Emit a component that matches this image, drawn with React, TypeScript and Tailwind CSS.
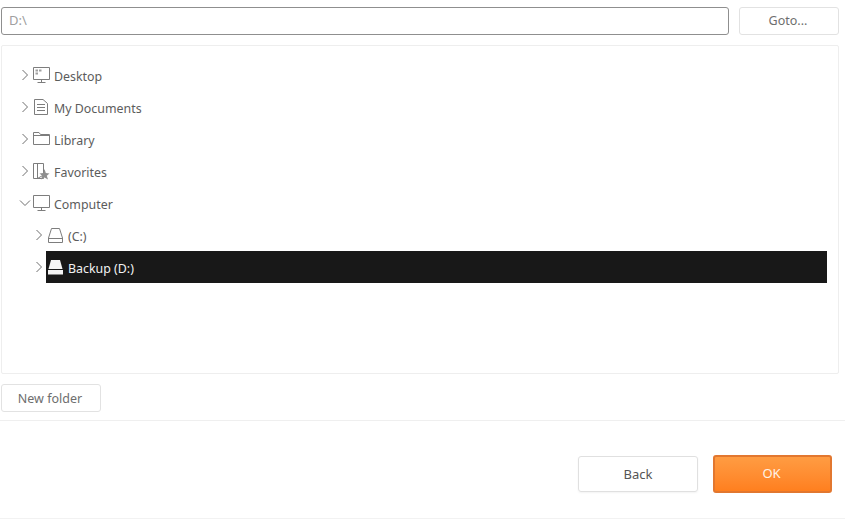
import { ReactNode } from "react";

const stroke = "#7d7d7d";

function Chevron({ open, color = "#6f6f6f" }: { open?: boolean; color?: string }) {
  return (
    <svg width="12" height="12" viewBox="0 0 12 12" fill="none" stroke={color} strokeWidth="1">
      {open ? <path d="M1 3.5 L6 8.5 L11 3.5" /> : <path d="M3.5 1 L8.5 6 L3.5 11" />}
    </svg>
  );
}

function DesktopIcon() {
  return (
    <svg width="17" height="17" viewBox="0 0 17 17" fill="none" stroke={stroke} strokeWidth="1">
      <path d="M0.5 0.5 H16.5 V12.5 H0.5 Z" />
      <path d="M8.5 12.5 V15 M4.5 15.5 H12.5" />
      <path d="M2.5 2.5 H5 V4.5 H2.5 Z M6 2.5 H8.5 V4.5 H6 Z M2.5 5.5 H5 V7.5 H2.5 Z" fill="#a0a0a0" stroke="none" />
    </svg>
  );
}

function DocIcon() {
  return (
    <svg width="17" height="17" viewBox="0 0 17 17" fill="none" stroke={stroke} strokeWidth="1">
      <path d="M1.5 0.5 H10 L14.5 4.5 V15.5 H1.5 Z" />
      <path d="M4 5.5 H12 M4 8.5 H12 M4 11.5 H12" />
    </svg>
  );
}

function FolderIcon() {
  return (
    <svg width="17" height="17" viewBox="0 0 17 17" fill="none" stroke={stroke} strokeWidth="1">
      <path d="M0.5 13.5 V1.5 H6 L7.5 3.5 H16.5 V13.5 Z" />
      <path d="M0.5 4.5 H16.5" />
    </svg>
  );
}

function FavoritesIcon() {
  return (
    <svg width="17" height="17" viewBox="0 0 17 17" fill="none" stroke={stroke} strokeWidth="1">
      <path d="M0.5 0.5 H10.5 V15.5 H0.5 Z" />
      <path d="M4.5 0.5 V15.5 L10.5 12" />
      <path d="M11.5 6 L12.8 10 L16.5 10.5 L13.8 12.8 L15 16.5 L11.5 14.5 L8 16.5 L9.2 12.8 L6.5 10.5 L10.2 10 Z" fill="#8f8f8f" stroke="none" />
    </svg>
  );
}

function MonitorIcon() {
  return (
    <svg width="17" height="17" viewBox="0 0 17 17" fill="none" stroke={stroke} strokeWidth="1">
      <path d="M0.5 0.5 H16.5 V12.5 H0.5 Z" />
      <path d="M8.5 12.5 V15 M4.5 15.5 H12.5" />
    </svg>
  );
}

function DriveIcon({ selected }: { selected?: boolean }) {
  if (selected) {
    return (
      <svg width="17" height="17" viewBox="0 0 17 17" fill="#f4f4f4" stroke="none">
        <path d="M4 1 H13 L15.5 10 H1.5 Z" />
        <path d="M1 11 H16 V15.5 H1 Z" />
      </svg>
    );
  }
  return (
    <svg width="17" height="17" viewBox="0 0 17 17" fill="none" stroke={stroke} strokeWidth="1">
      <path d="M4.5 1.5 H12.5 L15.5 11 V15.5 H1.5 V11 Z" />
      <path d="M1.5 11.5 H15.5" />
    </svg>
  );
}

function TreeRow({
  icon,
  label,
  open,
  nested,
  selected,
}: {
  icon: ReactNode;
  label: string;
  open?: boolean;
  nested?: boolean;
  selected?: boolean;
}) {
  return (
    <div className={`flex h-8 items-center ${nested ? "pl-[31px]" : "pl-[17px]"}`}>
      <span className="flex w-[13px] shrink-0 -translate-x-px justify-center">
        <Chevron open={open} />
      </span>
      <div
        className={`flex h-8 flex-1 items-center gap-1 ${
          selected ? "bg-[#181818] text-[#f2f2f2]" : "text-[#5c5c5c]"
        }`}
      >
        <span className="ml-px flex">{icon}</span>
        <span className="translate-y-[2px] text-[12.4px]">{label}</span>
      </div>
    </div>
  );
}

export default function App() {
  return (
    <div className="flex h-[520px] w-[845px] flex-col overflow-hidden bg-white font-['Noto_Sans',sans-serif]">
      <div className="flex gap-2.5 pl-px pr-1.5 pt-[7px]">
        <div className="flex h-7 flex-1 items-center rounded-[3px] border border-[#8f8f8f] px-[7px] text-[13px] text-[#a0a0a0]">
          D:\
        </div>
        <button className="h-7 w-[100px] rounded-[3px] border border-[#e2e2e2] pr-0.5 text-[12.5px] text-[#6e6e6e]">
          Goto...
        </button>
      </div>

      <div className="ml-px mr-1.5 mt-2.5 h-[329px] rounded-[2px] border border-[#eeeeee] pr-[11px] pt-[13px]">
        <TreeRow icon={<DesktopIcon />} label="Desktop" />
        <TreeRow icon={<DocIcon />} label="My Documents" />
        <TreeRow icon={<FolderIcon />} label="Library" />
        <TreeRow icon={<FavoritesIcon />} label="Favorites" />
        <TreeRow icon={<MonitorIcon />} label="Computer" open />
        <TreeRow icon={<DriveIcon />} label="(C:)" nested />
        <TreeRow icon={<DriveIcon selected />} label="Backup (D:)" nested selected />
      </div>

      <div className="ml-px mt-2.5">
        <button className="h-7 w-[100px] rounded-[3px] border border-[#e2e2e2] pr-0.5 pt-0.5 text-[12.5px] text-[#6e6e6e]">
          New folder
        </button>
      </div>

      <div className="mt-2 border-t border-[#efefef]" />

      <div className="flex items-center justify-end gap-[15px] pr-[13px] pt-[34px]">
        <button className="h-9 w-[120px] rounded-[3px] border border-[#e0e0e0] pt-0.5 text-[13px] text-[#555555] shadow-[0_1px_2px_rgba(0,0,0,0.05)]">
          Back
        </button>
        <button className="h-[38px] w-[119px] rounded-[3px] border-2 border-[#e2772f] bg-gradient-to-b from-[#ff9c42] to-[#ff7f1e] pr-0.5 text-[13px] text-[#fff3e6]">
          OK
        </button>
      </div>

      <div className="mt-[25px] border-t border-[#f2f2f2]" />
    </div>
  );
}
